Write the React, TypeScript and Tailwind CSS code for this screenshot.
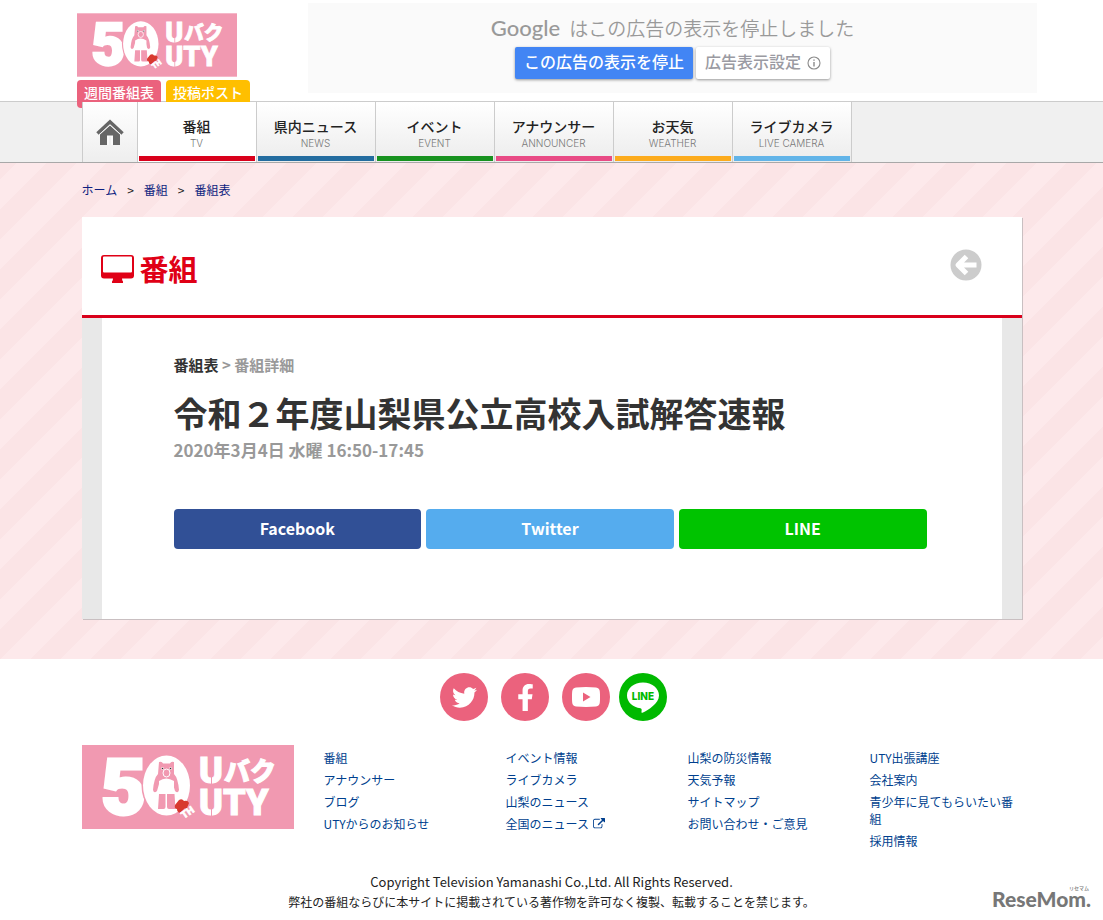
import React from "react";
import { FaTwitter, FaFacebookF } from "react-icons/fa";

type NavItem = { ja: string; en: string; bar: string; active?: boolean };

const navItems: NavItem[] = [
  { ja: "番組", en: "TV", bar: "bg-[#d9001b]", active: true },
  { ja: "県内ニュース", en: "NEWS", bar: "bg-[#236c9f]" },
  { ja: "イベント", en: "EVENT", bar: "bg-[#17921f]" },
  { ja: "アナウンサー", en: "ANNOUNCER", bar: "bg-[#e84b85]" },
  { ja: "お天気", en: "WEATHER", bar: "bg-[#fcab1d]" },
  { ja: "ライブカメラ", en: "LIVE CAMERA", bar: "bg-[#62b4e8]" },
];

const footerColumns: { label: string; external?: boolean }[][] = [
  [{ label: "番組" }, { label: "アナウンサー" }, { label: "ブログ" }, { label: "UTYからのお知らせ" }],
  [
    { label: "イベント情報" },
    { label: "ライブカメラ" },
    { label: "山梨のニュース" },
    { label: "全国のニュース", external: true },
  ],
  [{ label: "山梨の防災情報" }, { label: "天気予報" }, { label: "サイトマップ" }, { label: "お問い合わせ・ご意見" }],
  [{ label: "UTY出張講座" }, { label: "会社案内" }, { label: "青少年に見てもらいたい番組" }, { label: "採用情報" }],
];

function Logo({ className }: { className: string }) {
  return (
    <svg viewBox="0 0 212 84" className={className} role="img" aria-label="UTY 50th">
      <rect width="212" height="84" fill="#f199b1" />
      <text x="19" y="69" fill="#fff" stroke="#fff" strokeWidth="3" className="font-['Roboto'] text-[78px] font-black">
        5
      </text>
      <ellipse cx="84.500" cy="40.500" rx="25" ry="31.500" fill="#f199b1" />
      <ellipse cx="84.500" cy="40.500" rx="23.500" ry="30" fill="#fff" />
      <path
        d="M77 17q3-1 4 1.500h7q1-2.500 4-1.500v12q4 4 5 16q-1 4-4 1l-2-7q-7-6-14 0l-2 7q-3 3-4-1q1-12 5-16z"
        fill="#f199b1"
      />
      <path d="M77 36q7-5 15 0v11h-15z" fill="#fff" />
      <path d="M77 49h6.500v13q0 2-2 2h-5.500zM85 49h7.500l1 15h-6.500q-2 0-2-2z" fill="#f199b1" />
      <ellipse cx="84.500" cy="28" rx="3.500" ry="4" fill="#f199b1" stroke="#fff" strokeWidth="1" />
      <circle cx="80.500" cy="23.500" r="1.300" fill="#fff" />
      <circle cx="88.500" cy="23.500" r="1.300" fill="#fff" />
      <circle cx="80.500" cy="23.500" r=".8" fill="#333" />
      <circle cx="88.500" cy="23.500" r=".8" fill="#333" />
      <path d="M97 55q3-2 5 1 4-1 5 2l-2 5q-3 0-4 2l-3 3q-3-1-3-4-3 0-2-4z" fill="#d8392f" />
      <text
        x="102"
        y="74"
        transform="rotate(-35 102 74)"
        fill="#fff"
        stroke="#fff"
        strokeWidth=".6"
        className="font-['Roboto'] text-[10px] font-black"
      >
        TH
      </text>
      <text x="117" y="38" fill="#fff" stroke="#fff" strokeWidth="1" className="font-['Roboto'] text-[36px] font-black">
        U
      </text>
      <text x="142" y="36" fill="#fff" stroke="#fff" strokeWidth="1" className="font-['Noto_Sans_CJK_JP'] text-[26px] font-black">
        バク
      </text>
      <text x="117" y="70" fill="#fff" stroke="#fff" strokeWidth="1" className="font-['Roboto'] text-[36px] font-black">
        UTY
      </text>
      <path d="M129.500 11v28M129.500 43v28" stroke="#f199b1" strokeWidth="1" />
    </svg>
  );
}

function HomeIcon() {
  return (
    <svg viewBox="0 0 28 26" className="h-[26px] w-7" aria-hidden="true" fill="none">
      <path d="M1.500 14.500L14 3l12.500 11.500" stroke="#666" strokeWidth="3.600" />
      <path d="M4 15.500L14 6.500l10 9V26h-7.500v-9h-5v9H4z" fill="#666" />
      <path d="M3 15.800L14 5.800l11 10" stroke="#f7f7f7" strokeWidth=".9" />
      <rect x="11" y="16.500" width="6" height="9.500" fill="#fafafa" />
      <path d="M14 17.500v8.500" stroke="#ddd" strokeWidth=".6" />
    </svg>
  );
}

function MonitorIcon() {
  return (
    <svg viewBox="0 0 33 28" className="h-7 w-[33px]" aria-hidden="true">
      <path
        fillRule="evenodd"
        fill="#e00016"
        d="M3 0h27a3 3 0 0 1 3 3v17.500a3 3 0 0 1-3 3h-9q0 2 1 3v1.500H11v-1.500q1-1 1-3H3a3 3 0 0 1-3-3V3a3 3 0 0 1 3-3zM3 1.500Q2 1.500 2 2.500V16.500q0 1 1 1h27q1 0 1-1V2.500q0-1-1-1z"
      />
    </svg>
  );
}

function ExternalIcon() {
  return (
    <svg viewBox="0 0 1792 1792" className="ml-1 inline-block size-3 align-[-1px]" fill="currentColor" aria-hidden="true">
      <path d="M1408 928v320q0 119-84.500 203.500t-203.500 84.500h-832q-119 0-203.500-84.500t-84.500-203.500v-832q0-119 84.500-203.500t203.500-84.500h704q14 0 23 9t9 23v64q0 14-9 23t-23 9h-704q-66 0-113 47t-47 113v832q0 66 47 113t113 47h832q66 0 113-47t47-113v-320q0-14 9-23t23-9h64q14 0 23 9t9 23zm384-864v512q0 26-19 45t-45 19-45-19l-176-176-652 652q-10 10-23 10t-23-10l-114-114q-10-10-10-23t10-23l652-652-176-176q-19-19-19-45t19-45 45-19h512q26 0 45 19t19 45z" />
    </svg>
  );
}

function Header() {
  return (
    <header className="bg-white">
      <div className="mx-auto flex h-[101px] w-full max-w-[949px] items-start">
        <div className="mr-[58px] shrink-0 pt-[13px]">
          <a href="#top" className="block">
            <Logo className="block h-16 w-40" />
          </a>
          <div className="mt-[3px] flex gap-[5px] text-sm leading-[25px] font-medium text-white">
            <a href="#weekly" className="block h-7 w-21 rounded bg-[#eb627d] text-center">
              週間番組表
            </a>
            <a href="#post" className="block h-7 w-21 rounded bg-[#ffbf00] text-center">
              投稿ポスト
            </a>
          </div>
        </div>
        <div className="mt-[3px] -mr-[11px] flex h-[90px] min-w-0 grow flex-col items-center bg-[#fafafa] pt-[11px]">
          <p className="flex items-center gap-[9px] text-[19px] leading-7 text-[#999] font-[350]">
            <span className="font-['Lato'] text-[22px] font-medium text-[#999]">Google</span>
            <span>はこの広告の表示を停止しました</span>
          </p>
          <div className="mt-[5px] flex gap-[3px] text-base leading-7 font-medium">
            <button className="flex h-8 items-start rounded-xs bg-[#4285f4] px-[9px] text-white shadow-[0_1px_3px_rgba(0,0,0,0.4)]">
              この広告の表示を停止
            </button>
            <button className="flex h-8 items-start gap-[6px] rounded-xs bg-white px-[9px] text-[#9a9aa2] shadow-[0_1px_3px_rgba(0,0,0,0.4)]">
              広告表示設定
              <svg viewBox="0 0 14 14" className="mt-[9px] size-[14px]" fill="none" stroke="#8a8a8a" aria-hidden="true">
                <circle cx="7" cy="7" r="6" strokeWidth="1.100" />
                <path d="M7 6v4.500M7 3.500v1.300" strokeWidth="1.400" />
              </svg>
            </button>
          </div>
        </div>
      </div>
    </header>
  );
}

function Nav() {
  return (
    <nav className="border-t border-b border-t-[#ccc] border-b-[#a8a8a8] bg-[#f0f0f0]">
      <div className="relative mx-auto flex h-15 w-full max-w-[940px]">
        <a
          href="#home"
          aria-label="ホーム"
          className="flex w-14 shrink-0 items-center justify-center border-r border-l border-[#ccc] bg-linear-to-b from-white to-[#eee]"
        >
          <HomeIcon />
        </a>
        {navItems.map((item) => (
          <a
            key={item.en}
            href={"#" + item.en.toLowerCase().replace(" ", "-")}
            className={
              "flex w-[119px] flex-col border-r border-[#ccc] px-px pb-px text-center " +
              (item.active ? "bg-white" : "bg-linear-to-b from-white to-[#ececec]")
            }
          >
            <span className="pt-[13px] text-sm leading-[22px] font-medium text-[#222]">{item.ja}</span>
            <span className="font-['Inter'] text-[10px] leading-3 font-light text-[#777]">{item.en}</span>
            <span className={"mt-auto block h-[5px] " + item.bar} />
          </a>
        ))}
      </div>
    </nav>
  );
}

function Main() {
  return (
    <main className="pb-10">
      <div className="mx-auto w-full max-w-[940px]">
        <nav aria-label="パンくず" className="flex gap-[10px] pt-[18px] pb-[18px] text-xs leading-[18px] text-[#0d1f80]">
          <a href="#home">ホーム</a>
          <span className="text-[#222]">&gt;</span>
          <a href="#tv">番組</a>
          <span className="text-[#222]">&gt;</span>
          <a href="#table">番組表</a>
        </nav>
        <article className="bg-[#e8e8e8] shadow-[1px_1px_0_#c9bfc1]">
          <div className="flex h-[101px] items-start justify-between border-b-3 border-[#d9001b] bg-white pr-10 pl-[19px]">
            <h2 className="flex items-start gap-[6px] pt-[31px] text-[29px] leading-10 font-bold text-[#e00016]">
              <span className="pt-[7px]">
                <MonitorIcon />
              </span>
              番組
            </h2>
            <a href="#back" aria-label="戻る" className="mt-8">
              <svg viewBox="0 0 32 32" className="size-8" aria-hidden="true">
                <circle cx="16" cy="16" r="15.500" fill="#ccc" />
                <path
                  d="M16.500 7.500L8 16l8.500 8.500M9.500 16h17"
                  fill="none"
                  stroke="#fff"
                  strokeWidth="5"
                  strokeLinejoin="round"
                />
              </svg>
            </a>
          </div>
          <div className="mx-5 bg-white pt-9 pr-[75px] pb-[70px] pl-[72px]">
            <p className="text-[15px] leading-[22px] font-bold text-[#999]">
              <a href="#table" className="text-[#333]">
                番組表
              </a>{" "}
              &gt; 番組詳細
            </p>
            <h1 className="mt-[15px] text-[34px] leading-[44px] font-bold text-[#333]">令和２年度山梨県公立高校入試解答速報</h1>
            <p className="mt-[3px] text-[17px] leading-6 font-bold text-[#999]">2020年3月4日 水曜 16:50-17:45</p>
            <div className="mt-[47px] grid grid-cols-3 gap-[5px] text-center text-base leading-[38px] font-bold text-white">
              <a href="#facebook" className="block h-10 rounded bg-[#315096]">
                Facebook
              </a>
              <a href="#twitter" className="block h-10 rounded bg-[#55acee]">
                Twitter
              </a>
              <a href="#line" className="block h-10 rounded bg-[#00c300]">
                LINE
              </a>
            </div>
          </div>
        </article>
      </div>
    </main>
  );
}

function SocialLinks() {
  const circle = "flex size-12 items-center justify-center rounded-full bg-[#eb627d] text-white";
  return (
    <div className="flex justify-center gap-[13px] pt-[14px] pl-1">
      <a href="#tw" aria-label="Twitter" className={circle}>
        <FaTwitter size={25} />
      </a>
      <a href="#fb" aria-label="Facebook" className={circle}>
        <FaFacebookF size={27} />
      </a>
      <div className="flex gap-[9px]">
        <a href="#yt" aria-label="YouTube" className={circle}>
          <svg viewBox="0 0 28 20" className="h-5 w-7" aria-hidden="true">
            <path
              d="M4 .4Q14-.4 24 .4q3.600.4 3.800 4Q28.300 10 27.800 15.600q-.2 3.600-3.800 4Q14 20.400 4 19.600q-3.600-.4-3.800-4Q-.3 10 .2 4.400q.2-3.600 3.800-4z"
              fill="#fff"
            />
            <path d="M11 5.500v9l7.500-4.500z" fill="#eb627d" />
          </svg>
        </a>
        <a href="#ln" aria-label="LINE">
          <svg viewBox="0 0 48 48" className="size-12" aria-hidden="true">
            <circle cx="24" cy="24" r="24" fill="#00b900" />
            <path
              d="M24 9.500c-9 0-16 5.800-16 13 0 6.500 5.800 11.800 13.500 12.800 1.300.3 1.300 1.500 1 3.200-.2 1.300.3 1.700 1.500 1.100C29 37 40 30.500 40 22.500c0-7.200-7-13-16-13z"
              fill="#fff"
            />
            <text
              x="24"
              y="27"
              textAnchor="middle"
              fill="#00b900"
              className="font-['Inter'] text-[10px] font-extrabold"
            >
              LINE
            </text>
          </svg>
        </a>
      </div>
    </div>
  );
}

function Footer() {
  return (
    <footer className="relative bg-white">
      <SocialLinks />
      <div className="mx-auto mt-6 flex w-full max-w-[940px] items-start gap-[30px]">
        <a href="#top" className="block shrink-0">
          <Logo className="block h-21 w-[212px]" />
        </a>
        <div className="grid grow grid-cols-4 gap-[30px] pt-1 text-xs leading-[17px] text-[#003f8e]">
          {footerColumns.map((column, i) => (
            <ul key={i} className="flex flex-col gap-[5px]">
              {column.map((link) => (
                <li key={link.label}>
                  <a href={"#" + link.label}>
                    {link.label}
                    {link.external && <ExternalIcon />}
                  </a>
                </li>
              ))}
            </ul>
          ))}
        </div>
      </div>
      <div className="mt-[23px] pb-2 text-center text-xs leading-5 text-[#222]">
        <p className="text-[13px]">Copyright Television Yamanashi Co.,Ltd. All Rights Reserved.</p>
        <p>弊社の番組ならびに本サイトに掲載されている著作物を許可なく複製、転載することを禁じます。</p>
      </div>
      <svg
        viewBox="0 0 104 26"
        className="absolute right-[8px] bottom-[10px] h-[26px] w-[104px]"
        role="img"
        aria-label="ReseMom"
      >
        <text x="1" y="23" fill="#777" className="font-['Lato'] text-[21px] font-black">
          ReseMom.
        </text>
        <text x="78" y="6" fill="#777" className="font-['Noto_Sans_CJK_JP'] text-[5px] font-medium">
          リセマム
        </text>
      </svg>
    </footer>
  );
}

export default function App() {
  return (
    <div
      id="top"
      className="bg-[#fbe4e6] bg-[linear-gradient(135deg,#fde9eb_25%,transparent_25%,transparent_50%,#fde9eb_50%,#fde9eb_75%,transparent_75%)] bg-size-[60px_60px] font-['Noto_Sans_CJK_JP',sans-serif] text-[#333]"
    >
      <Header />
      <Nav />
      <Main />
      <Footer />
    </div>
  );
}
